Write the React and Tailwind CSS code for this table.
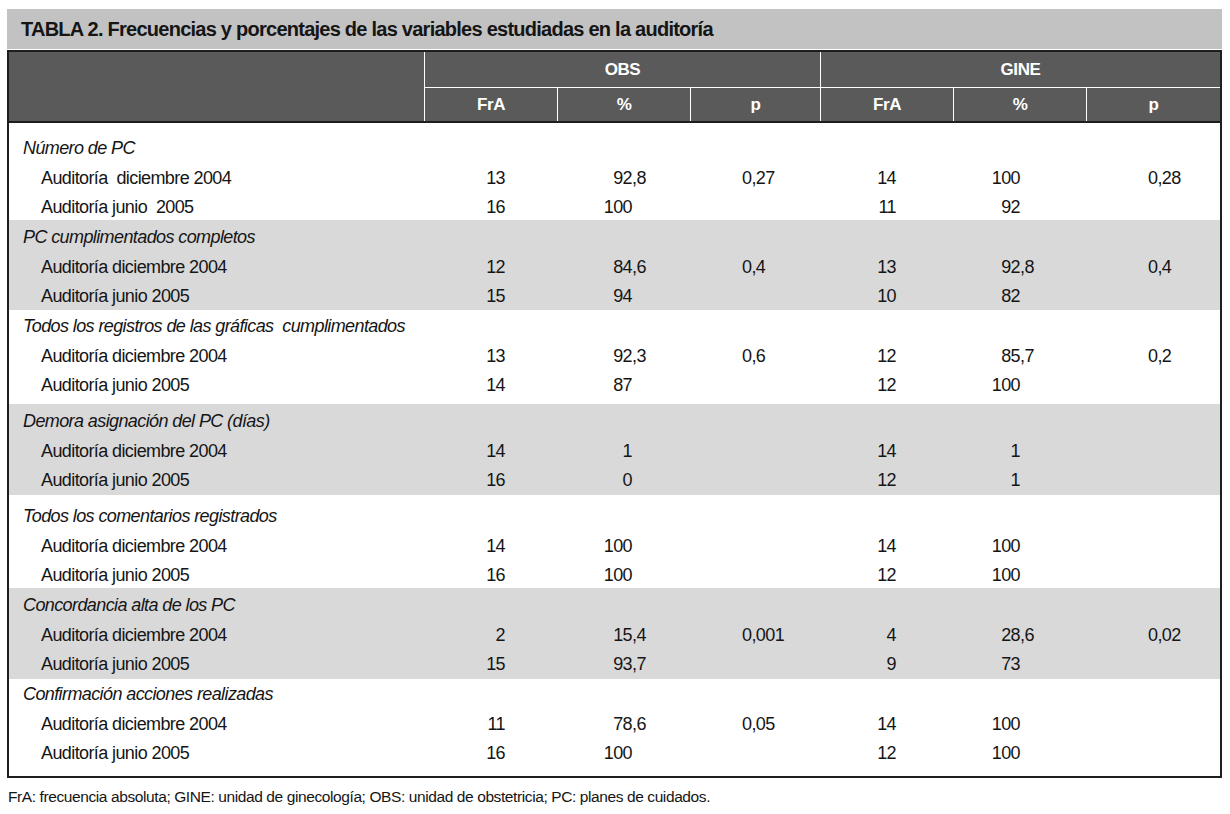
import React from 'react'

// Tabla 2 de la auditoría: OBS / GINE, FrA · % · p
const GROUPS = [
  {
    title: 'Número de PC', shade: false, h: 'h-[97px]', pt: 'pt-[11px]',
    rows: [
      ['Auditoría  diciembre 2004', '13', '92,8', '0,27', '14', '100', '0,28'],
      ['Auditoría junio  2005', '16', '100', '', '11', '92', '']
    ]
  },
  {
    title: 'PC cumplimentados completos', shade: true, h: 'h-[90px]', pt: 'pt-[3px]',
    rows: [
      ['Auditoría diciembre 2004', '12', '84,6', '0,4', '13', '92,8', '0,4'],
      ['Auditoría junio 2005', '15', '94', '', '10', '82', '']
    ]
  },
  {
    title: 'Todos los registros de las gráficas  cumplimentados', shade: false, h: 'h-[94px]', pt: 'pt-[2px]',
    rows: [
      ['Auditoría diciembre 2004', '13', '92,3', '0,6', '12', '85,7', '0,2'],
      ['Auditoría junio 2005', '14', '87', '', '12', '100', '']
    ]
  },
  {
    title: 'Demora asignación del PC (días)', shade: true, h: 'h-[91px]', pt: 'pt-[3px]',
    rows: [
      ['Auditoría diciembre 2004', '14', '1', '', '14', '1', ''],
      ['Auditoría junio 2005', '16', '0', '', '12', '1', '']
    ]
  },
  {
    title: 'Todos los comentarios registrados', shade: false, h: 'h-[93px]', pt: 'pt-[7px]',
    rows: [
      ['Auditoría diciembre 2004', '14', '100', '', '14', '100', ''],
      ['Auditoría junio 2005', '16', '100', '', '12', '100', '']
    ]
  },
  {
    title: 'Concordancia alta de los PC', shade: true, h: 'h-[91px]', pt: 'pt-[3px]',
    rows: [
      ['Auditoría diciembre 2004', '2', '15,4', '0,001', '4', '28,6', '0,02'],
      ['Auditoría junio 2005', '15', '93,7', '', '9', '73', '']
    ]
  },
  {
    title: 'Confirmación acciones realizadas', shade: false, h: 'h-[97px]', pt: 'pt-[1px]',
    rows: [
      ['Auditoría diciembre 2004', '11', '78,6', '0,05', '14', '100', ''],
      ['Auditoría junio 2005', '16', '100', '', '12', '100', '']
    ]
  }
]

const COLS = 'grid grid-cols-[415px_133px_133px_130px_133px_133px_1fr]'
const FONT = { fontFamily: '"Liberation Sans", Arial, sans-serif' }

// decimal aligned: integer part right-aligned in a fixed box
function Pct({ v, pad }) {
  const [int, frac] = v.split(',')
  return (
    <div className={pad}>
      <span className="inline-block w-[40px] text-right">{int}</span>
      {frac !== undefined && <span>,{frac}</span>}
    </div>
  )
}

function DataRow({ r }) {
  return (
    <div className={`${COLS} h-[29.5px] items-center leading-[29.5px]`}>
      <div className="pl-[32px] whitespace-pre">{r[0]}</div>
      <div className="text-right pr-[52px]">{r[1]}</div>
      <Pct v={r[2]} pad="pl-[35px]" />
      <div className="pl-[52px]">{r[3]}</div>
      <div className="text-right pr-[57px]">{r[4]}</div>
      <Pct v={r[5]} pad="pl-[27px]" />
      <div className="pl-[62px]">{r[6]}</div>
    </div>
  )
}

export default function App() {
  return (
    <div className="w-[1230px] h-[814px] bg-white text-[#151515] overflow-hidden" style={FONT}>
      <div className="pt-[9px] pl-[7px] w-[1222px]">
        {/* title bar */}
        <div className="h-[40px] bg-[#c2c2c2] flex items-center pl-[14px] text-[20px] font-bold tracking-[-0.75px]">
          TABLA 2. Frecuencias y porcentajes de las variables estudiadas en la auditoría
        </div>

        <div className="mt-[1px] border-2 border-[#1e1e1e]">
          {/* header */}
          <div className={`${COLS} bg-[#5a5a5a] text-white font-bold text-[17px] tracking-[-0.4px] border-b-2 border-[#1e1e1e]`}>
            <div className="row-span-2" />
            <div className="col-span-3 h-[36px] flex items-center justify-center border-l border-b border-white">OBS</div>
            <div className="col-span-3 h-[36px] flex items-center justify-center border-l border-b border-white">GINE</div>
            <div className="h-[33px] flex items-center justify-center border-l border-white">FrA</div>
            <div className="h-[33px] flex items-center justify-center border-l border-white">%</div>
            <div className="h-[33px] flex items-center justify-center border-l border-white">p</div>
            <div className="h-[33px] flex items-center justify-center border-l border-white">FrA</div>
            <div className="h-[33px] flex items-center justify-center border-l border-white">%</div>
            <div className="h-[33px] flex items-center justify-center border-l border-white">p</div>
          </div>

          {/* body */}
          <div className="text-[18px] tracking-[-0.6px]">
            {GROUPS.map(g => (
              <div key={g.title} className={`${g.h} ${g.pt} ${g.shade ? 'bg-[#d9d9d9]' : 'bg-white'}`}>
                <div className="h-[29.5px] leading-[29.5px] pl-[14px] italic whitespace-pre">{g.title}</div>
                {g.rows.map(r => <DataRow key={r[0]} r={r} />)}
              </div>
            ))}
          </div>
        </div>

        <div className="mt-[9px] pl-px text-[15.5px] leading-[20px] tracking-[-0.4px]">
          FrA: frecuencia absoluta; GINE: unidad de ginecología; OBS: unidad de obstetricia; PC: planes de cuidados.
        </div>
      </div>
    </div>
  )
}
